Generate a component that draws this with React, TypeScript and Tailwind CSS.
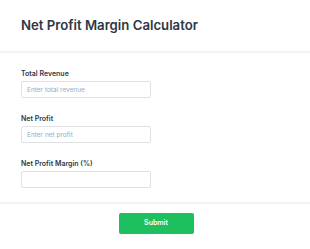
import React from "react";

function Field({ label, placeholder }: { label: string; placeholder?: string }) {
  return (
    <div className="flex flex-col">
      <label className="text-[7px] font-semibold leading-[10px] text-[#2d3748]">{label}</label>
      <input
        className="mt-[2px] h-[17px] w-[130px] rounded-[2px] border border-[#dfe1e6] bg-white px-[5px] text-[6.5px] text-[#2d3748] outline-none placeholder:text-[#a0a8b8]"
        placeholder={placeholder}
      />
    </div>
  );
}

export default function App() {
  return (
    <div className="h-[249px] w-[310px] bg-white" style={{ fontFamily: "Inter, 'Noto Sans', sans-serif" }}>
      <div className="border-b-2 border-[#f3f4f6] px-[21px] pb-[17px] pt-[16px]">
        <h1 className="text-[13.2px] font-semibold leading-[18px] text-[#2d3748]">Net Profit Margin Calculator</h1>
      </div>
      <div className="flex flex-col gap-[16px] px-[21px] pb-[14px] pt-[16px]">
        <Field label="Total Revenue" placeholder="Enter total revenue" />
        <Field label="Net Profit" placeholder="Enter net profit" />
        <Field label="Net Profit Margin (%)" />
      </div>
      <div className="flex justify-center border-t-2 border-[#f3f4f6] pt-[9px]">
        <button className="ml-[2px] h-[21px] w-[75px] rounded-[2px] bg-[#1ebf5e] text-[7px] font-semibold text-white">
          Submit
        </button>
      </div>
    </div>
  );
}
